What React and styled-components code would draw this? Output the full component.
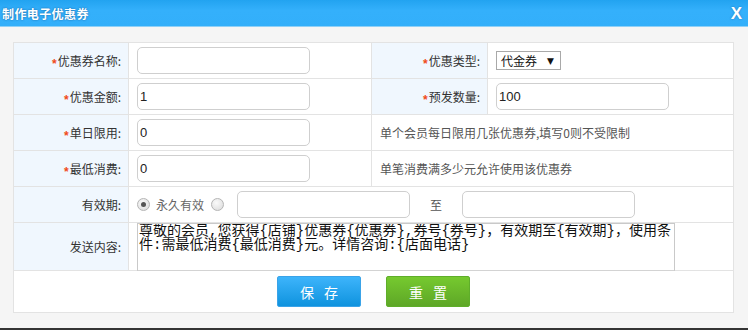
import React from "react";
import styled, { createGlobalStyle } from "styled-components";

const Global = createGlobalStyle`
  html, body { margin: 0; padding: 0; background: #f5f5f5; }
  body { font-family: "Noto Sans CJK SC", "Liberation Sans", sans-serif; }
  * { box-sizing: border-box; }
`;

const Dialog = styled.div`
  width: 748px;
  height: 330px;
  display: flex;
  flex-direction: column;
  background: #f5f5f5;
  overflow: hidden;
`;

const TitleBar = styled.div`
  height: 27px;
  flex: none;
  display: flex;
  align-items: center;
  justify-content: space-between;
  padding: 0 6px 0 2px;
  background: linear-gradient(#22a3f0, #34b0fb 40%, #33affa);
  border-bottom: 1px solid #8fd0f7;
`;

const Title = styled.span`
  color: #fff;
  font-size: 12px;
  font-weight: bold;
  letter-spacing: 0.4px;
  text-shadow: 0 0 2px rgba(0, 60, 120, 0.7);
`;

const Close = styled.span`
  color: #fff;
  font-family: "Liberation Sans", sans-serif;
  font-size: 17px;
  font-weight: bold;
  line-height: 1;
  margin-top: 1px;
  text-shadow: 0 0 2px rgba(0, 60, 120, 0.5);
`;

const Body = styled.div`
  flex: 1;
  padding: 15px 0 0 13px;
`;

const Grid = styled.div`
  width: 721px;
  display: grid;
  grid-template-columns: 115px 243px 116px 246px;
  grid-template-rows: repeat(5, 36px) 48px 42px;
  border-left: 1px solid #e3e3e3;
  border-top: 1px solid #e3e3e3;
  background: #fff;
`;

const Cell = styled.div`
  border-right: 1px solid #e3e3e3;
  border-bottom: 1px solid #e3e3e3;
  display: flex;
  align-items: center;
  grid-column: ${(p) => p.$span || "auto"};
  padding: ${(p) => p.$pad || "0 0 0 8px"};
  background: #fff;
`;

const Label = styled(Cell)`
  justify-content: flex-end;
  padding: 0 7px 0 0;
  background: #f0f7fe;
  color: #333;
  font-size: 12px;
`;

const Star = styled.span`
  color: #f04a1c;
  font-size: 12px;
  font-weight: bold;
  line-height: 1;
  margin-top: 6px;
  margin-right: 1px;
  font-family: "Liberation Sans", sans-serif;
`;

const Input = styled.input`
  width: 173px;
  height: 27px;
  border: 1px solid #cfcfcf;
  border-radius: 5px;
  padding: 0 2px;
  font-family: "Liberation Sans", sans-serif;
  font-size: 13px;
  color: #222;
  background: #fff;
  outline: none;
  margin-left: ${(p) => p.$ml || "0"};
`;

const FakeSelect = styled.div`
  width: 65px;
  height: 19px;
  border: 1px solid #a9a9a9;
  background: #fff;
  display: flex;
  align-items: center;
  justify-content: space-between;
  padding: 0 6px 0 4px;
  font-size: 12px;
  color: #111;
`;

const Arrow = styled.span`
  font-size: 9px;
  font-family: "DejaVu Sans", sans-serif;
  color: #111;
`;

const Hint = styled.span`
  color: #555;
  font-size: 12px;
`;

const Radio = styled.span`
  width: 13px;
  height: 13px;
  border-radius: 50%;
  border: 1px solid #b5b5b5;
  background: radial-gradient(circle at 40% 35%, #fafafa, #d9d9d9);
  display: inline-flex;
  align-items: center;
  justify-content: center;
  flex: none;
  &::after {
    content: "";
    width: 5px;
    height: 5px;
    border-radius: 50%;
    background: ${(p) => (p.$checked ? "#555" : "transparent")};
  }
`;

const RadioText = styled.span`
  color: #666;
  font-size: 12px;
  margin: 0 7px 0 6px;
`;

const To = styled.span`
  color: #555;
  font-size: 12px;
  margin: 0 20px 0 20px;
`;

const TextArea = styled.textarea`
  width: 538px;
  height: 49px;
  align-self: flex-start;
  border: 1px solid #c9c9c9;
  border-bottom: 2px solid #d3d3d3;
  padding: 0 0 0 1px;
  font-family: "Liberation Mono", "Noto Sans CJK SC", monospace;
  font-size: 14px;
  line-height: 14px;
  color: #111;
  resize: none;
  overflow: hidden;
  outline: none;
  background: #fff;
`;

const ButtonRow = styled(Cell)`
  justify-content: center;
  padding: 0;
  gap: 25px;
`;

const Button = styled.button`
  width: 84px;
  height: 31px;
  border-radius: 2px;
  border: 1px solid ${(p) => (p.$green ? "#5fae2a" : "#3aa3e8")};
  background: ${(p) =>
    p.$green
      ? "linear-gradient(#76c92f, #5ea727)"
      : "linear-gradient(#3db4fb, #0f93de)"};
  color: #fff;
  font-family: "Noto Sans CJK SC", sans-serif;
  font-size: 14px;
  letter-spacing: 10px;
  text-indent: 10px;
  cursor: pointer;
`;

const Bottom = styled.div`
  height: 2px;
  flex: none;
  background: #343434;
`;

function Req({ children }) {
  return (
    <>
      <Star>*</Star>
      {children}
    </>
  );
}

const MESSAGE =
  "尊敬的会员,您获得{店铺}优惠券{优惠券},券号{券号}，有效期至{有效期}，使用条\n件:需最低消费{最低消费}元。详情咨询:{店面电话}";

export default function App() {
  return (
    <>
      <Global />
      <Dialog>
        <TitleBar>
          <Title>制作电子优惠券</Title>
          <Close>X</Close>
        </TitleBar>
        <Body>
          <Grid>
            <Label>
              <Req>优惠券名称:</Req>
            </Label>
            <Cell>
              <Input defaultValue="" />
            </Cell>
            <Label>
              <Req>优惠类型:</Req>
            </Label>
            <Cell>
              <FakeSelect>
                代金券<Arrow>▼</Arrow>
              </FakeSelect>
            </Cell>

            <Label>
              <Req>优惠金额:</Req>
            </Label>
            <Cell>
              <Input defaultValue="1" />
            </Cell>
            <Label>
              <Req>预发数量:</Req>
            </Label>
            <Cell>
              <Input defaultValue="100" />
            </Cell>

            <Label>
              <Req>单日限用:</Req>
            </Label>
            <Cell>
              <Input defaultValue="0" />
            </Cell>
            <Cell $span="3 / 5">
              <Hint>单个会员每日限用几张优惠券,填写0则不受限制</Hint>
            </Cell>

            <Label>
              <Req>最低消费:</Req>
            </Label>
            <Cell>
              <Input defaultValue="0" />
            </Cell>
            <Cell $span="3 / 5">
              <Hint>单笔消费满多少元允许使用该优惠券</Hint>
            </Cell>

            <Label>有效期:</Label>
            <Cell $span="2 / 5">
              <Radio $checked />
              <RadioText>永久有效</RadioText>
              <Radio />
              <Input defaultValue="" $ml="13px" />
              <To>至</To>
              <Input defaultValue="" />
            </Cell>

            <Label>发送内容:</Label>
            <Cell $span="2 / 5">
              <TextArea defaultValue={MESSAGE} />
            </Cell>

            <ButtonRow $span="1 / 5">
              <Button>保存</Button>
              <Button $green>重置</Button>
            </ButtonRow>
          </Grid>
        </Body>
        <Bottom />
      </Dialog>
    </>
  );
}
